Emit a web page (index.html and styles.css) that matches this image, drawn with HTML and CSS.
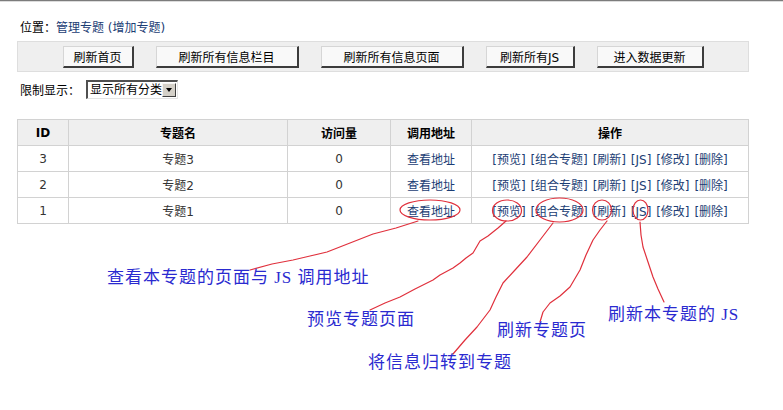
FILE: index.html
```html
<!DOCTYPE html>
<html lang="zh-CN">
<head>
<meta charset="utf-8">
<title>管理专题</title>
<link rel="stylesheet" href="styles.css">
</head>
<body>
<div class="topline"></div>
<div class="wrap">
  <div class="crumb">位置：<a class="lnk" href="#">管理专题</a> <a class="lnk" href="#">(增加专题)</a></div>
  <div class="bar">
    <span class="btn btn-a">刷新首页</span>
    <span class="btn btn-b">刷新所有信息栏目</span>
    <span class="btn btn-b">刷新所有信息页面</span>
    <span class="btn btn-c">刷新所有JS</span>
    <span class="btn btn-d">进入数据更新</span>
  </div>
  <div class="filter">
    <span class="filter-label">限制显示：</span>
    <span class="select"><span class="select-text">显示所有分类</span><span class="select-arrow"><span class="tri"></span></span></span>
  </div>
  <table class="grid">
    <thead>
      <tr><th class="c-id">ID</th><th class="c-name">专题名</th><th class="c-visit">访问量</th><th class="c-addr">调用地址</th><th class="c-ops">操作</th></tr>
    </thead>
    <tbody>
      <tr><td>3</td><td>专题3</td><td>0</td><td><a class="lnk" href="#">查看地址</a></td><td class="ops"><a class="lnk" href="#">[预览]</a> <a class="lnk" href="#">[组合专题]</a> <a class="lnk" href="#">[刷新]</a> <a class="lnk" href="#">[JS]</a> <a class="lnk" href="#">[修改]</a> <a class="lnk" href="#">[删除]</a></td></tr>
      <tr><td>2</td><td>专题2</td><td>0</td><td><a class="lnk" href="#">查看地址</a></td><td class="ops"><a class="lnk" href="#">[预览]</a> <a class="lnk" href="#">[组合专题]</a> <a class="lnk" href="#">[刷新]</a> <a class="lnk" href="#">[JS]</a> <a class="lnk" href="#">[修改]</a> <a class="lnk" href="#">[删除]</a></td></tr>
      <tr><td>1</td><td>专题1</td><td>0</td><td><a class="lnk" href="#">查看地址</a></td><td class="ops"><a class="lnk" href="#">[预览]</a> <a class="lnk" href="#">[组合专题]</a> <a class="lnk" href="#">[刷新]</a> <a class="lnk" href="#">[JS]</a> <a class="lnk" href="#">[修改]</a> <a class="lnk" href="#">[删除]</a></td></tr>
    </tbody>
  </table>
</div>

<div class="notes">
  <svg class="marks" width="783" height="410" viewBox="0 0 783 410">
    <g fill="none" stroke="#e0303c" stroke-width="1.2" stroke-linejoin="round" stroke-linecap="round">
      <ellipse cx="430" cy="210" rx="30" ry="10"/>
      <ellipse cx="507" cy="210.5" rx="14.5" ry="10.5"/>
      <ellipse cx="559.5" cy="210" rx="23.5" ry="12"/>
      <ellipse cx="602" cy="210" rx="9.5" ry="10"/>
      <ellipse cx="640.5" cy="210" rx="7.5" ry="10"/>
      <polyline points="418,221 396,228 373,234 350,243 327,252 310,256 293,260 272,264 250,270"/>
      <polyline points="506,221 498,228 488,236 480,241 473,253 466,258 460,263 453,268 440,275 433,280 415,289 400,297 385,303 370,310"/>
      <polyline points="553,223 540,240 527,257 515,270 503,283 496,297 490,310 477,327 465,340 453,354"/>
      <polyline points="607,221 600,230 593,240 586,255 580,270 570,287 560,296 550,303 543,312 540,322"/>
      <polyline points="640,222 641,235 643,247 648,262 653,277 658,289 664,302"/>
    </g>
  </svg>
  <div class="note n1">查看本专题的页面与 JS 调用地址</div>
  <div class="note n2">预览专题页面</div>
  <div class="note n3">将信息归转到专题</div>
  <div class="note n4">刷新专题页</div>
  <div class="note n5">刷新本专题的 JS</div>
</div>
</body>
</html>
```

FILE: styles.css
```css
html, body {
  margin: 0;
  padding: 0;
  background: #ffffff;
}
body {
  position: relative;
  width: 783px;
  height: 410px;
  overflow: hidden;
  font-family: "DejaVu Sans", "Noto Sans CJK SC", sans-serif;
  font-size: 12px;
  color: #222;
}
.topline {
  height: 1px;
  border-top: 1px solid #7c7c7c;
  background: #dcdcdc;
}
.wrap {
  padding-left: 17px;
  width: 732px;
}
.lnk {
  color: #1b3d74;
  text-decoration: none;
}
.crumb {
  margin-top: 19px;
  padding-left: 3px;
  line-height: 14px;
  height: 14px;
  color: #000;
}
.bar {
  margin-top: 6px;
  box-sizing: border-box;
  height: 31px;
  background: #efefef;
  border: 1px solid #dedede;
  display: flex;
  justify-content: center;
  align-items: center;
  gap: 22px;
}
.btn {
  box-sizing: border-box;
  height: 22px;
  display: flex;
  align-items: center;
  justify-content: center;
  background: #f9f9f9;
  border-top: 1px solid #d6d6d6;
  border-left: 1px solid #d6d6d6;
  border-right: 2px solid #3c3c3c;
  border-bottom: 2px solid #3c3c3c;
  color: #000;
  font-size: 12px;
  padding-top: 1px;
}
.btn-a { width: 71px; }
.btn-b { width: 143px; }
.btn-c { width: 89px; }
.btn-d { width: 107px; }
.filter {
  margin-top: 8px;
  height: 19px;
  display: flex;
  align-items: center;
  padding-left: 3px;
}
.filter-label {
  width: 66px;
  color: #000;
}
.select {
  box-sizing: border-box;
  width: 92px;
  height: 19px;
  display: flex;
  align-items: center;
  justify-content: space-between;
  background: #fff;
  border-top: 2px solid #505050;
  border-left: 2px solid #505050;
  border-right: 1px solid #e4e4e4;
  border-bottom: 1px solid #e4e4e4;
  padding: 0 1px 0 2px;
}
.select-text {
  color: #000;
  line-height: 15px;
}
.select-arrow {
  box-sizing: border-box;
  width: 14px;
  height: 14px;
  background: #d4d0c8;
  border-top: 1px solid #f4f4f4;
  border-left: 1px solid #f4f4f4;
  border-right: 1px solid #404040;
  border-bottom: 1px solid #404040;
  display: flex;
  align-items: center;
  justify-content: center;
}
.tri {
  width: 0;
  height: 0;
  border-left: 3.5px solid transparent;
  border-right: 3.5px solid transparent;
  border-top: 4px solid #000;
}
.grid {
  margin-top: 20px;
  width: 732px;
  border-collapse: collapse;
  border: 1px solid #cfcfcf;
  table-layout: fixed;
}
.grid th, .grid td {
  border: 1px solid #d2d2d2;
  height: 25px;
  padding: 0;
  text-align: center;
  vertical-align: middle;
  font-size: 12px;
}
.grid th {
  background: #efefef;
  color: #000;
  font-weight: bold;
}
.grid td {
  color: #333;
}
.c-id { width: 50px; }
.c-name { width: 218px; }
.c-visit { width: 102px; }
.c-addr { width: 80px; }
.c-ops { width: auto; }
.ops {
  white-space: nowrap;
  word-spacing: 1px;
}
.notes {
  position: absolute;
  left: 0;
  top: 0;
  width: 783px;
  height: 410px;
  pointer-events: none;
}
.marks {
  position: absolute;
  left: 0;
  top: 0;
}
.note {
  position: absolute;
  font-family: "Liberation Serif", "Noto Sans CJK SC", serif;
  font-size: 17px;
  line-height: 17px;
  letter-spacing: 1px;
  color: #2a2ad0;
  white-space: nowrap;
}
.n1 { left: 107px; top: 269px; }
.n2 { left: 307px; top: 311px; }
.n3 { left: 368px; top: 354px; }
.n4 { left: 497px; top: 322px; }
.n5 { left: 608px; top: 306px; }
```
